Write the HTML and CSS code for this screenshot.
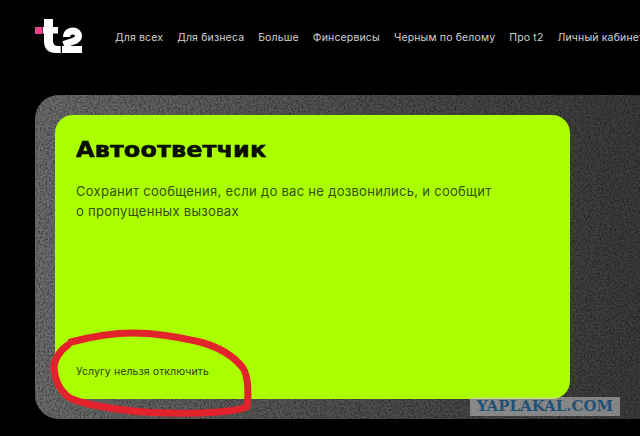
FILE: index.html
```html
<!DOCTYPE html>
<html lang="ru">
<head>
<meta charset="utf-8">
<title>Автоответчик</title>
<link rel="stylesheet" href="styles.css">
</head>
<body>
<header class="header">
  <svg class="logo" viewBox="0 0 48 36" width="48" height="36" aria-label="t2">
    <rect x="0" y="9" width="7.500" height="7" fill="#e8438f"/>
    <path d="M8 9H9V1H18V9H23V15.500H18V23Q18 28 23 28H25.700V35H21Q9 35 9 23V15.500H8Z" fill="#fff"/>
    <path d="M31.500 19C31.500 15 34.500 13 38 13C41 13 43.500 15 43.500 18C43.500 21 41 22.500 37.500 23.500L28.500 26.500" fill="none" stroke="#fff" stroke-width="7"/>
    <rect x="27" y="28" width="20" height="7" fill="#fff"/>
  </svg>
  <nav class="nav">
    <a>Для всех</a>
    <a>Для бизнеса</a>
    <a>Больше</a>
    <a>Финсервисы</a>
    <a>Черным по белому</a>
    <a>Про t2</a>
    <a>Личный кабинет</a>
  </nav>
</header>
<main class="panel">
  <svg class="noise" width="100%" height="100%" aria-hidden="true">
    <filter id="grain" x="0" y="0" width="100%" height="100%">
      <feTurbulence type="fractalNoise" baseFrequency="0.55" numOctaves="2" seed="4"/>
      <feColorMatrix type="matrix" values="0 0 0 0 0  0 0 0 0 0  0 0 0 0 0  2.400 0 0 0 -0.950"/>
    </filter>
    <rect width="100%" height="100%" filter="url(#grain)" opacity="0.45"/>
  </svg>
  <section class="card">
    <div class="top">
      <h1 class="title">Автоответчик</h1>
      <p class="desc">Сохранит сообщения, если до вас не дозвонились, и сообщит<br>о пропущенных вызовах</p>
    </div>
    <p class="note">Услугу нельзя отключить</p>
  </section>
</main>
<svg class="scribble" viewBox="0 0 640 436" width="640" height="436" aria-hidden="true">
  <path d="M71 342C90 337 112 333 133 333C155 333 178 337 200 342C215 346 232 354 243 368C248 376 249 392 247 407C235 412 200 414 170 413C145 413 118 410 93 405C80 402 72 400 67 396C60 390 55 380 54 368C54 360 60 350 68 345" fill="none" stroke="#e3232c" stroke-width="7" stroke-linecap="round" stroke-linejoin="round"/>
</svg>
<div class="mark">YAPLAKAL.COM</div>
</body>
</html>
```
FILE: styles.css
```css
* { box-sizing: border-box; }
html, body {
  margin: 0;
  height: 436px;
  overflow: hidden;
  background: #000;
}
body {
  position: relative;
  width: 640px;
  font-family: Inter, "Liberation Sans", sans-serif;
}
.header {
  display: flex;
  align-items: flex-start;
  width: 640px;
  height: 95px;
  padding: 18px 0 0 35px;
  overflow: hidden;
}
.logo {
  flex: none;
  display: block;
}
.nav {
  display: flex;
  flex: none;
  gap: 14px;
  margin: 13px 0 0 32px;
  color: #d2d2d2;
  font-size: 10.500px;
  letter-spacing: 0.150px;
  line-height: 14px;
  white-space: nowrap;
}
.panel {
  position: relative;
  width: 605px;
  height: 324px;
  margin-left: 35px;
  padding: 20px;
  border-radius: 24px 0 0 24px;
  overflow: hidden;
  background: linear-gradient(90deg, #6e6e6e 0, #5c5c5c 30%, #484848 70%, #3c3c3c 100%);
}
.noise {
  position: absolute;
  inset: 0;
}
.card {
  position: relative;
  display: flex;
  flex-direction: column;
  justify-content: space-between;
  width: 515px;
  height: 284px;
  padding: 21px 21px 20px;
  border-radius: 18px;
  background: #aaff00;
}
.title {
  width: max-content;
  margin: 0;
  color: #0a0f00;
  font-family: "DejaVu Sans", sans-serif;
  font-size: 22px;
  font-weight: 700;
  line-height: 28px;
  -webkit-text-stroke: 0.6px #0a0f00;
  transform: scaleX(1.095);
  transform-origin: left center;
}
.desc {
  margin: 17px 0 0;
  color: #33500a;
  font-size: 13px;
  letter-spacing: 0.300px;
  line-height: 20px;
}
.note {
  margin: 0;
  color: #2a420a;
  font-size: 10.500px;
  letter-spacing: 0.100px;
  line-height: 14px;
}
.scribble {
  position: absolute;
  left: 0;
  top: 0;
}
.mark {
  position: absolute;
  left: 470px;
  top: 397px;
  width: 150px;
  height: 19px;
  background: rgba(205, 205, 205, 0.520);
  color: #1f5176;
  font-family: "DejaVu Serif", serif;
  font-size: 15px;
  font-weight: 700;
  line-height: 19px;
  text-align: center;
  white-space: nowrap;
}
```
